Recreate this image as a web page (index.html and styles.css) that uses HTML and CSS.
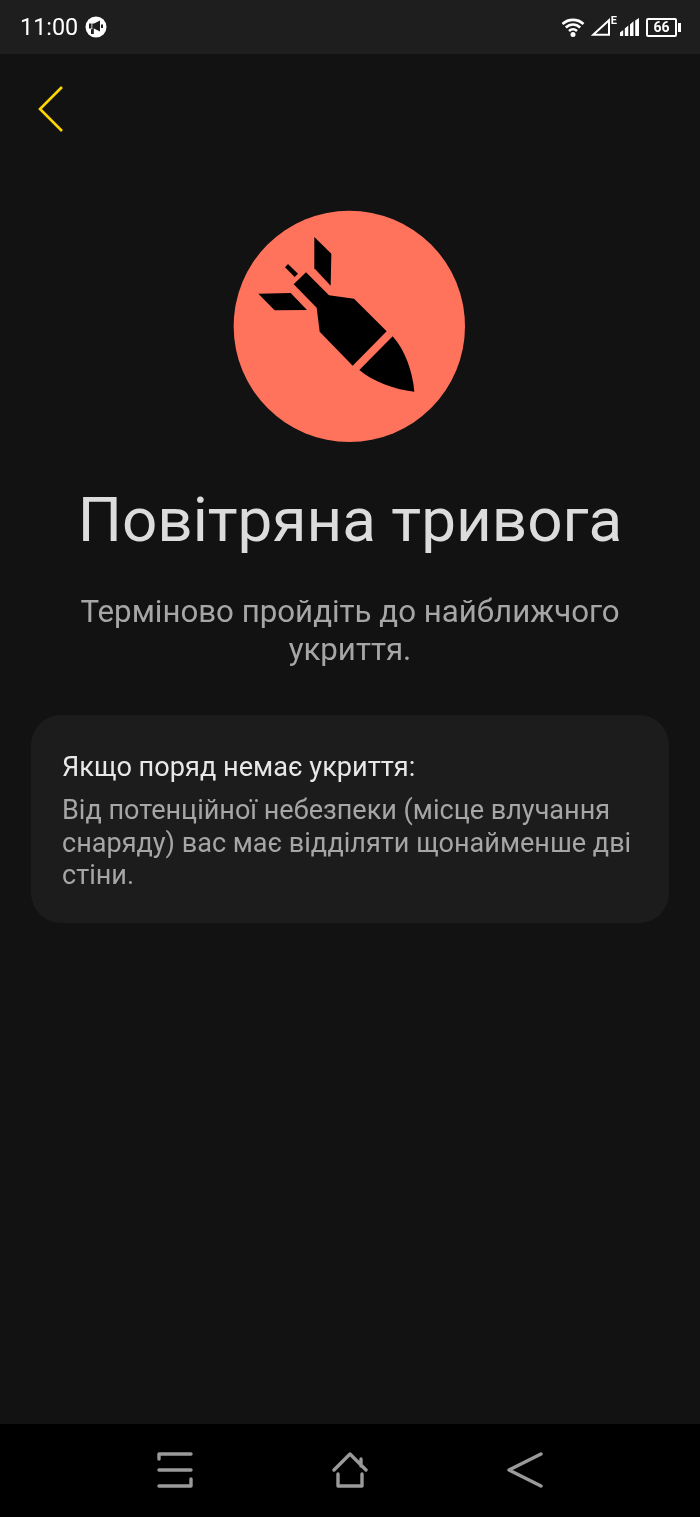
FILE: index.html
```html
<!DOCTYPE html>
<html lang="uk">
<head>
<meta charset="utf-8">
<title>Повітряна тривога</title>
<link rel="stylesheet" href="styles.css">
</head>
<body>
<div class="phone">
  <header class="statusbar">
    <div class="status-left">
      <span class="clock">11:00</span>
      <svg class="megaphone" width="22" height="22" viewBox="0 0 22 22"><circle cx="11" cy="11" r="10.500" fill="#fff"/><path d="M4 7.500h2.500v5H4zM7.300 7.500h1.700L15 4.500v11l-6-3H8.800V18H6V13.300h1.300zM16 8.500h2v3.500h-2z" fill="#1e1e1e"/></svg>
    </div>
    <div class="status-right">
      <svg width="24" height="22" viewBox="0 0 24 22"><path d="M1.500 8C7.500 2.500 16.500 2.500 22.500 8M4.800 11.500C9 7.500 15 7.500 19.200 11.500M8 15c2.500-2.200 5.500-2.200 8 0" fill="none" stroke="#fff" stroke-width="2.600"/><circle cx="12" cy="18.500" r="2.500" fill="#fff"/></svg>
      <span class="sim">
        <svg width="20" height="18" viewBox="0 0 20 18"><path d="M2.200 16.800 18 2.200v14.600z" fill="none" stroke="#fff" stroke-width="2"/></svg>
        <span class="edge">E</span>
      </span>
      <svg class="signal" width="20" height="18" viewBox="0 0 20 18"><path d="M0 14.500l3.200-2.500V18H0zM4.800 10.500l3.500-3V18H4.800zM10 6.500l3.500-3.200V18H10zM15.200 2.500 19 0v18h-3.800z" fill="#fff"/></svg>
      <span class="battery"><span class="battery-level">66</span></span>
    </div>
  </header>

  <main class="content">
    <a class="back" href="#" aria-label="Назад">
      <svg width="26" height="46" viewBox="0 0 26 46"><path d="M24 1 2 23l22 22" fill="none" stroke="#ffd600" stroke-width="2.600"/></svg>
    </a>
    <svg class="alert-icon" width="240" height="240" viewBox="0 0 720 720">
      <circle cx="358" cy="364" r="347" fill="#ff735c"/>
      <path d="M253 96 304 146 302 242 253 190Z"/>
      <path d="M85 266 182 264 231 315 134 316Z"/>
      <path d="M165 187 174 177 204 206 194 216Z"/>
      <path d="M228 202 297 271 372 281 470 379 368 482 269 380 260 308 191 238Z"/>
      <path d="M488 394C525 435 548 500 553 560 490 553 430 530 388 495Z"/>
    </svg>
    <h1 class="title">Повітряна тривога</h1>
    <p class="subtitle">Терміново пройдіть до найближчого укриття.</p>
    <section class="card">
      <h2 class="card-title">Якщо поряд немає укриття:</h2>
      <p class="card-text">Від потенційної небезпеки (місце влучання снаряду) вас має відділяти щонайменше дві стіни.</p>
    </section>
  </main>

  <nav class="navbar">
    <svg width="36" height="36" viewBox="0 0 36 36"><path d="M2 7V2h32M2 18h32M2 34h32v-7" fill="none" stroke="#9a9a9a" stroke-width="3.400" stroke-linecap="round" stroke-linejoin="round"/></svg>
    <svg width="36" height="36" viewBox="0 0 36 36"><path d="M2 18 18 2l16 16M29 7v7M6 22v12h24V22" fill="none" stroke="#9a9a9a" stroke-width="3.400" stroke-linecap="round" stroke-linejoin="round"/></svg>
    <svg width="36" height="36" viewBox="0 0 36 36"><path d="M34 2 2 18l32 16" fill="none" stroke="#9a9a9a" stroke-width="3.400" stroke-linecap="round" stroke-linejoin="round"/></svg>
  </nav>
</div>
</body>
</html>
```
FILE: styles.css
```css
* { box-sizing: border-box; }
html, body { margin: 0; padding: 0; }
body { background: #121212; font-family: Roboto, "Noto Sans", sans-serif; }
.phone { width: 700px; height: 1517px; display: flex; flex-direction: column; background: #121212; }
.statusbar { height: 54px; flex: none; background: #1e1e1e; display: flex; align-items: center; justify-content: space-between; padding: 0 18px 0 20px; color: #fff; will-change: transform; }
.status-left { display: flex; align-items: center; gap: 7px; }
.clock { font-size: 23.400px; line-height: 54px; }
.megaphone { display: block; }
.status-right { display: flex; align-items: center; gap: 6px; }
.status-right svg { display: block; }
.sim { position: relative; display: block; width: 27px; height: 18px; }
.edge { position: absolute; right: 1px; top: -3px; font-size: 11px; font-weight: 700; line-height: 12px; }
.signal { margin-left: -4px; }
.battery { position: relative; display: flex; align-items: center; justify-content: center; width: 31px; height: 19px; margin-right: 5px; border: 2px solid #fff; border-radius: 2px; }
.battery::after { content: ""; position: absolute; right: -6px; top: 3px; width: 3px; height: 9px; background: #fff; }
.battery-level { font-size: 14px; font-weight: 700; line-height: 15px; }
.content { flex: 1; display: flex; flex-direction: column; align-items: center; padding: 0 31px; will-change: transform; }
.back { align-self: flex-start; display: block; height: 46px; margin: 32px 0 0 7px; }
.back svg { display: block; }
.alert-icon { display: block; margin-top: 73px; fill: #000; }
.title { margin: 40px 0 0; font-size: 62px; line-height: 70px; font-weight: 400; color: #dcdcdc; text-align: center; white-space: nowrap; }
.subtitle { margin: 38px 0 0; width: 600px; font-size: 31.250px; line-height: 38px; color: #a6a6a6; text-align: center; }
.card { width: 638px; height: 208px; margin-top: 46px; padding: 34px 31px; background: #1c1c1c; border-radius: 30px; }
.card-title { margin: 0; font-size: 27.150px; line-height: 36px; font-weight: 400; color: #e8e8e8; }
.card-text { margin: 9px 0 0; font-size: 27.050px; line-height: 32.500px; color: #a6a6a6; }
.navbar { height: 93px; flex: none; background: #000; display: flex; align-items: flex-start; justify-content: center; gap: 139px; padding-top: 28px; }
.navbar svg { display: block; }
```
